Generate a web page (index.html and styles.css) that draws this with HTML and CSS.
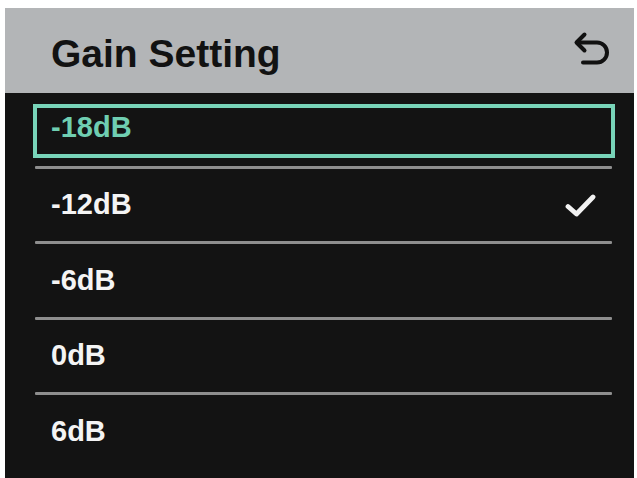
FILE: index.html
```html
<!DOCTYPE html>
<html>
<head>
<meta charset="utf-8">
<link rel="stylesheet" href="styles.css">
</head>
<body>
<div class="screen">
  <div class="header">
    <div class="title">Gain Setting</div>
    <svg class="back" width="40" height="40" viewBox="570 30 40 40">
      <path d="M583.5 34.5 L575.5 42.5 L583.5 50.5" fill="none" stroke="#111" stroke-width="4" stroke-linecap="round" stroke-linejoin="round"/>
      <path d="M577 42.5 H596 A10 10 0 0 1 596 62.5 H582" fill="none" stroke="#111" stroke-width="4" stroke-linecap="round"/>
    </svg>
  </div>
  <div class="list">
    <div class="item selected">-18dB</div>
    <div class="sep"></div>
    <div class="item">-12dB
      <svg class="check" width="32" height="26" viewBox="565 191 32 26">
        <path d="M568 205.5 L576.5 213 L593 196" fill="none" stroke="#f2f2f2" stroke-width="4.8" stroke-linecap="round" stroke-linejoin="round"/>
      </svg>
    </div>
    <div class="sep"></div>
    <div class="item">-6dB</div>
    <div class="sep"></div>
    <div class="item">0dB</div>
    <div class="sep"></div>
    <div class="item">6dB</div>
  </div>
</div>
</body>
</html>
```
FILE: styles.css
```css
html, body {
  margin: 0;
  padding: 0;
  background: #ffffff;
}
body {
  font-family: "Liberation Sans", Arial, sans-serif;
}
.screen {
  margin: 8px 0 0 5px;
  width: 629px;
  height: 470px;
  background: #131313;
  overflow: hidden;
}
.header {
  height: 85px;
  box-sizing: border-box;
  background: #b3b5b7;
  display: flex;
  justify-content: space-between;
  align-items: flex-start;
  padding: 0 23px 0 46px;
}
.title {
  margin-top: 26px;
  font-size: 39px;
  line-height: 39px;
  font-weight: bold;
  color: #121212;
}
.back {
  margin-top: 22px;
  display: block;
}
.list {
  padding: 11px 19px 0 28px;
}
.item {
  display: flex;
  align-items: center;
  justify-content: space-between;
  height: 72.5px;
  box-sizing: border-box;
  padding: 0 18px 0 18px;
  font-size: 29px;
  line-height: 29px;
  font-weight: bold;
  color: #f4f4f4;
}
.item.selected {
  height: 54px;
  border: 4px solid #78d4b9;
  padding: 0 14px 8px 14px;
  color: #6fceb1;
}
.sep {
  height: 3px;
  margin: 0 3px 0 2px;
  background: #8e8e8e;
  border-radius: 1px;
}
.item.selected + .sep {
  margin-top: 7.5px;
}
.check {
  display: block;
}
```
